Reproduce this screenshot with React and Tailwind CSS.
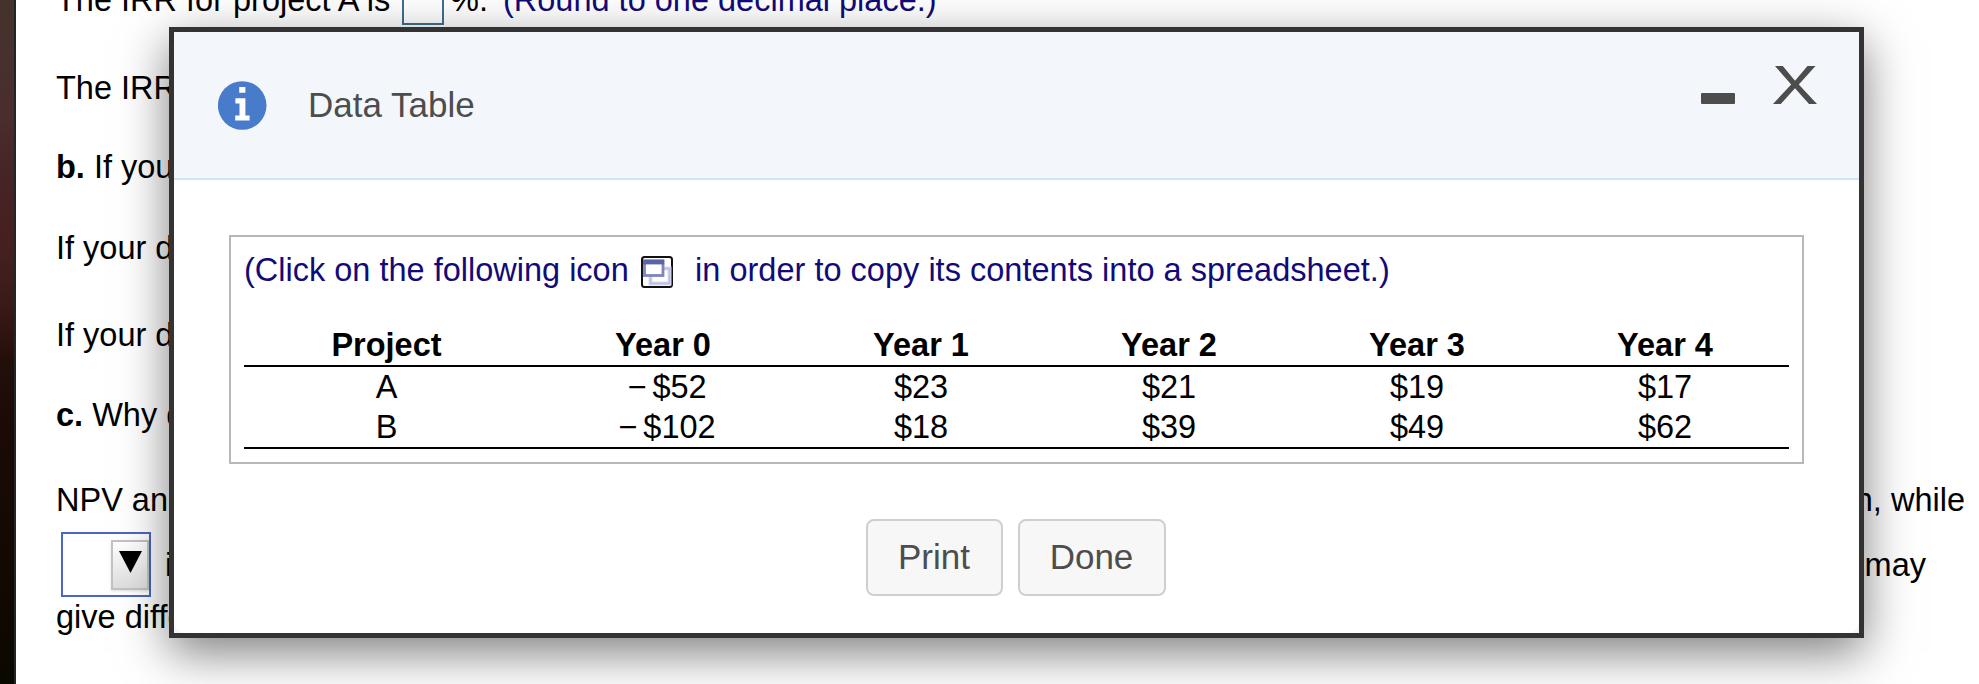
const columns = ["Project", "Year 0", "Year 1", "Year 2", "Year 3", "Year 4"];
const rows = [
  ["A", "− $52", "$23", "$21", "$19", "$17"],
  ["B", "− $102", "$18", "$39", "$49", "$62"],
];

function InfoIcon() {
  return (
    <svg className="h-[49px] w-[49px] shrink-0" viewBox="0 0 49 49">
      <circle cx="24.2" cy="24.5" r="24.3" fill="#487cca" />
      <path fill="#fff" d="M21.2 6h6.2v5.8h-6.2zM17.4 17.2h10V34.5h4.2v5H17.2v-5h4.3v-12h-4.1z" />
    </svg>
  );
}

function CopyIcon() {
  return (
    <svg className="h-8 w-8 shrink-0" viewBox="0 0 32 32">
      <rect x="1" y="1" width="30" height="30" rx="2.5" fill="#fff" stroke="#111" strokeWidth="2" />
      <rect x="9.5" y="12.5" width="19" height="15" fill="#fff" stroke="#dcddf0" strokeWidth="4" />
      <rect x="9.5" y="12.5" width="19" height="15" fill="none" stroke="#bfc1e2" strokeWidth="2" />
      <rect x="3.5" y="5" width="18.5" height="14.5" fill="#fff" stroke="#7f84bf" strokeWidth="2.8" />
      <path fill="#5a62a8" d="M2.2 3.6h21v4.8h-21z" />
    </svg>
  );
}

function Value({ text }) {
  if (!text.startsWith("−")) return text;
  return <span className="[word-spacing:-3px]">{text}</span>;
}

function Background() {
  return (
    <div className="flex h-full">
      <div className="w-4 shrink-0 border-r-2 border-[#232527] bg-linear-to-b from-[#44322c] via-[#1c0a06] via-62% to-[#0b0800]">
        <div className="h-[360px] bg-linear-to-b from-[#44322c] via-[#4a3634] via-33% to-[#260d09]">
          <div className="h-full bg-linear-to-b from-transparent via-[#4a2022]/80 via-66% to-transparent" />
        </div>
      </div>
      <div className="-mt-5 flex-1 pl-10 whitespace-pre">
        <div className="flex h-[88px]">
          <span className="w-[346px]">The IRR for project A is</span>
          <span className="h-[45px] w-[42px] border-2 border-[#3f6f8e]" />
          <span className="ml-[6px] w-[53px]">%.</span>
          <span className="text-[#120a78]">(Round to one decimal place.)</span>
        </div>
        <div className="h-[79px]">The IRR</div>
        <div className="h-[81px]"><b>b.</b> If your</div>
        <div className="h-[87px]">If your d</div>
        <div className="h-20">If your d</div>
        <div className="h-[85px]"><b>c.</b> Why do</div>
        <div className="flex h-[52px] justify-between pr-[14px]">
          <span>NPV and</span>
          <span>n, while</span>
        </div>
        <div className="flex h-[65px] justify-between pr-[53px]">
          <div className="flex">
            <div className="ml-[5px] flex h-[65px] w-[90px] items-center justify-end border-2 border-[#4a67c5]">
              <div className="flex h-[50px] w-[38px] justify-center border-2 border-[#c3c3c3] bg-linear-to-b from-white to-[#dedede] pt-[9px] shadow-sm">
                <svg className="h-[22px] w-[23px] shrink-0" viewBox="0 0 23 22">
                  <path d="M0 0h23L11.5 22z" />
                </svg>
              </div>
            </div>
            <span className="pt-[13px] pl-[14px]">is</span>
          </div>
          <span className="pt-[13px]">may</span>
        </div>
        <div>give diffe</div>
      </div>
    </div>
  );
}

export default function App() {
  return (
    <div className="relative h-[684px] w-[1979px] overflow-hidden bg-white font-['Liberation_Sans',Arial,sans-serif] text-[32.5px] leading-10 text-black">
      <Background />
      <div className="absolute top-[27px] left-[169px] flex h-[611px] w-[1695px] flex-col border-5 border-[#333] bg-[#f3f7fc] shadow-[0_15px_45px_rgba(0,0,0,0.5)]">
        <header className="flex h-[148px] shrink-0 border-b-2 border-[#d1e5f8] pt-[34px] pr-[42px] pl-11">
          <div className="pt-[15px]"><InfoIcon /></div>
          <h1 className="flex-1 pt-[19px] pl-[41px] text-[35px] text-[#4d4d4d]">Data Table</h1>
          <div className="mt-[27px] h-[11px] w-[34px] rounded-[1px] bg-[#4d4d4d]" />
          <svg className="ml-[38px] h-[38px] w-11" viewBox="0 0 44 38">
            <path fill="#4d4d4d" d="M2 0h7.8L22 14.8 34.5 0h8L25.8 18.4 44 38h-8L22 22.2 7.8 38H0l18.2-19.6z" />
          </svg>
        </header>
        <main className="flex-1 rounded-b-xl bg-white px-[55px] pt-[55px]">
          <section className="border-2 border-[#b8b8b8] p-[13px]">
            <p className="flex items-center whitespace-pre text-[#120a78]">
              <span className="w-[397px]">(Click on the following icon</span>
              <span className="mt-1"><CopyIcon /></span>
              <span className="pl-[22px] tracking-[0.02px]">in order to copy its contents into a spreadsheet.)</span>
            </p>
            <table className="mt-[35px] w-[1545px] table-fixed border-collapse text-center">
              <colgroup>
                <col className="w-[285px]" />
                <col className="w-[268px]" />
                <col className="w-[248px]" />
                <col className="w-[248px]" />
                <col className="w-[248px]" />
                <col className="w-[248px]" />
              </colgroup>
              <thead>
                <tr className="border-b-2 border-black">
                  {columns.map((c) => <th key={c} className="p-0 font-bold">{c}</th>)}
                </tr>
              </thead>
              <tbody className="border-b-2 border-black">
                {rows.map((r) => (
                  <tr key={r[0]}>
                    {r.map((v, i) => (
                      <td key={i} className={i === 1 ? "p-0 pl-2" : "p-0"}><Value text={v} /></td>
                    ))}
                  </tr>
                ))}
              </tbody>
            </table>
          </section>
          <div className="mt-[55px] flex justify-center gap-[15px] pr-[2px] text-[35px] text-[#4d4d4d]">
            <button className="h-[77px] w-[137px] rounded-lg border-2 border-[#cfcfcf] bg-[#f7f7f7] pb-[2px]">Print</button>
            <button className="h-[77px] w-[148px] rounded-lg border-2 border-[#cfcfcf] bg-[#f7f7f7] pb-[2px]">Done</button>
          </div>
        </main>
      </div>
    </div>
  );
}
